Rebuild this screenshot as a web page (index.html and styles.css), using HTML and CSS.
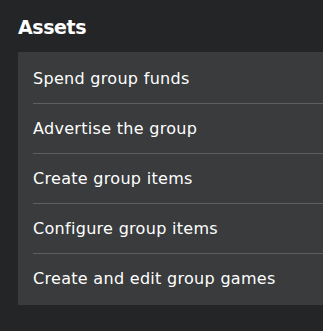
FILE: index.html
```html
<!DOCTYPE html>
<html lang="en">

<head>
    <meta charset="UTF-8" />
    <title>Assets</title>
    <meta name="viewport" content="width=device-width, initial-scale=1.0" />
    <link rel="stylesheet" href="styles.css">
</head>

<body>

    <!-- Assets permissions -->
    <section class="section">
        <h2 class="section-title">Assets</h2>
        <ul class="perm-list">
            <li class="perm-item">Spend group funds</li>
            <li class="perm-item">Advertise the group</li>
            <li class="perm-item">Create group items</li>
            <li class="perm-item">Configure group items</li>
            <li class="perm-item">Create and edit group games</li>
        </ul>
    </section>

</body>

</html>
```

FILE: styles.css
```css
body {
    margin: 0;
    background: #232527;
    font-family: 'DejaVu Sans', sans-serif;
    color: #fff;
    overflow: hidden;
}

.section {
    padding: 14px 0 0 18px;
}

.section-title {
    margin: 0 0 12px;
    font-size: 19px;
    font-weight: bold;
    letter-spacing: -0.4px;
    line-height: 26px;
}

.perm-list {
    list-style: none;
    margin: 0;
    padding: 2px 0 2px 15px;
    background: #393b3d;
}

.perm-item {
    height: 49px;
    line-height: 49px;
    font-size: 16px;
    letter-spacing: 0.3px;
    border-bottom: 1px solid #5c5e60;
}

.perm-item:last-child {
    border-bottom: none;
}
```
